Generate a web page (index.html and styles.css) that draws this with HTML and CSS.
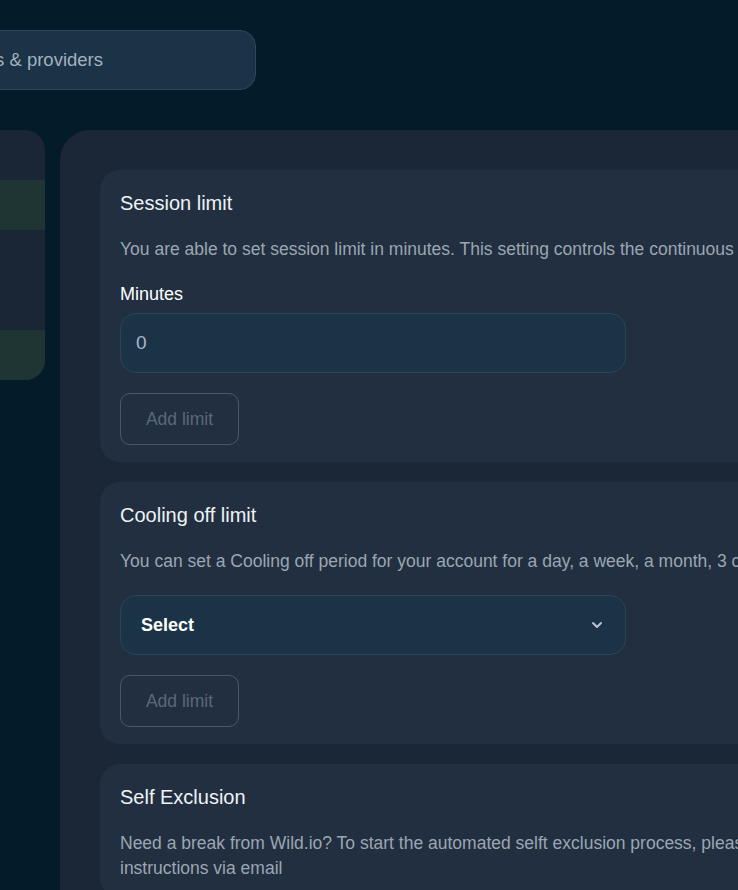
FILE: index.html
```html
<!DOCTYPE html>
<html lang="en">
<head>
<meta charset="utf-8">
<link rel="stylesheet" href="styles.css">
</head>
<body>
<div class="page">
  <div class="topbar">
    <div class="search">Search games &amp; providers</div>
  </div>
  <div class="layout">
    <aside class="sidebar">
      <div class="side-item active"></div>
      <div class="side-item"></div>
      <div class="side-item"></div>
      <div class="side-item active last"></div>
    </aside>
    <main class="panel">
      <section class="card">
        <h2 class="card-title">Session limit</h2>
        <p class="card-desc">You are able to set session limit in minutes. This setting controls the continuous time you spend playing</p>
        <label class="field-label">Minutes</label>
        <div class="input">0</div>
        <button class="btn">Add limit</button>
      </section>
      <section class="card">
        <h2 class="card-title">Cooling off limit</h2>
        <p class="card-desc">You can set a Cooling off period for your account for a day, a week, a month, 3 calendar months</p>
        <div class="select">
          <span>Select</span>
          <svg class="chev" width="14" height="14" viewBox="0 0 14 14"><path d="M3 5l4 4 4-4" fill="none" stroke="#b9c3cd" stroke-width="2" stroke-linecap="round" stroke-linejoin="round"/></svg>
        </div>
        <button class="btn">Add limit</button>
      </section>
      <section class="card">
        <h2 class="card-title">Self Exclusion</h2>
        <p class="card-desc">Need a break from Wild.io? To start the automated selft exclusion process, please click the button below to receive further instructions via email</p>
      </section>
    </main>
  </div>
</div>
</body>
</html>
```

FILE: styles.css
```css
* { box-sizing: border-box; }
html, body { margin: 0; padding: 0; }
body {
  background: #041b2a;
  font-family: "Liberation Sans", Arial, sans-serif;
  overflow: hidden;
  width: 738px;
  height: 890px;
}
.page {
  width: 1300px;
}
.topbar {
  padding-top: 30px;
  height: 130px;
}
.search {
  margin-left: -200px;
  width: 456px;
  height: 60px;
  background: #1a3347;
  border: 1px solid #2c475c;
  border-radius: 16px;
  display: flex;
  align-items: center;
  justify-content: flex-end;
  padding-right: 152px;
  color: #a3b1bd;
  font-size: 18.5px;
  white-space: nowrap;
}
.layout {
  display: flex;
  align-items: flex-start;
  gap: 15px;
}
.sidebar {
  margin-left: -200px;
  width: 245px;
  height: 250px;
  background: #1a2535;
  border-radius: 20px;
  padding-top: 50px;
  overflow: hidden;
}
.side-item {
  height: 50px;
}
.side-item.active {
  background: #1f3534;
}
.panel {
  width: 1090px;
  background: #1b2636;
  border-radius: 30px;
  padding: 40px;
  display: flex;
  flex-direction: column;
  gap: 20px;
}
.card {
  background: #222f40;
  border-radius: 20px;
  padding: 21px 20px 17px;
  display: flex;
  flex-direction: column;
  align-items: flex-start;
}
.card-title {
  margin: 0;
  font-size: 20px;
  line-height: 24px;
  font-weight: 400;
  color: #eef2f6;
}
.card-desc {
  margin: 22px 0 0;
  font-size: 17.5px;
  line-height: 25px;
  color: #9ba6b2;
}
.field-label {
  margin-top: 20px;
  font-size: 18px;
  line-height: 24px;
  color: #ffffff;
}
.input {
  margin-top: 7px;
  width: 506px;
  height: 60px;
  background: #1a3347;
  border: 1px solid #2b4458;
  border-radius: 16px;
  display: flex;
  align-items: center;
  padding-left: 15px;
  font-size: 19px;
  color: #aab7c3;
}
.select {
  margin-top: 21px;
  width: 506px;
  height: 60px;
  background: #1a3347;
  border: 1px solid #2b4458;
  border-radius: 16px;
  display: flex;
  align-items: center;
  justify-content: space-between;
  padding: 0 21px 0 20px;
  font-size: 18px;
  font-weight: 700;
  color: #ffffff;
}
.chev { display: block; }
.btn {
  margin-top: 20px;
  width: 119px;
  height: 52px;
  background: transparent;
  border: 1px solid #4a5767;
  border-radius: 10px;
  font-family: "Liberation Sans", Arial, sans-serif;
  font-size: 17.5px;
  color: #5b6878;
  padding: 0;
}
```
